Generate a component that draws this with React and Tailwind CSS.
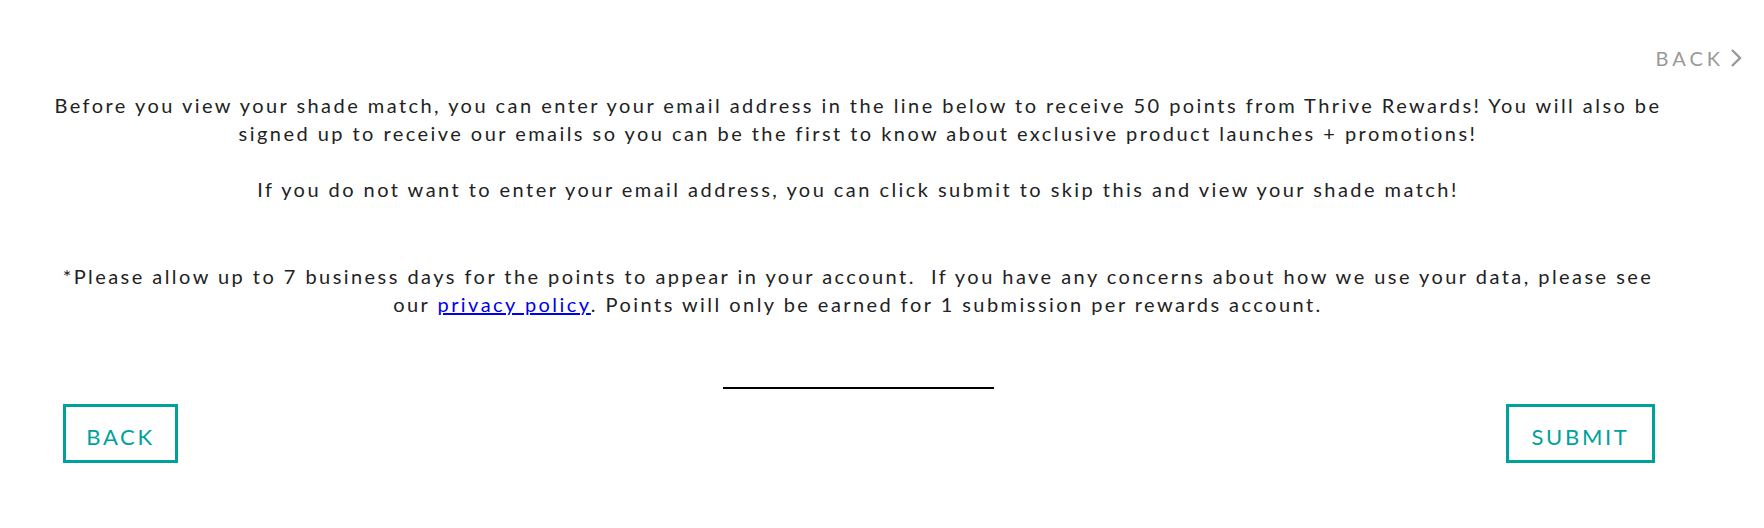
export default function App() {
  return (
    <div className="w-full h-[528px] bg-white text-[#222] font-['Lato','Liberation_Sans',sans-serif]">
      <div className="flex justify-end pt-[45px] pr-[22px]">
        <button className="flex items-center gap-[6px] text-[20px] leading-[26px] tracking-[4px] text-[#999]">
          BACK
          <svg width="12" height="20" viewBox="0 0 12 20" fill="none" stroke="#999" strokeWidth="2.4">
            <path d="M2 2l8 8-8 8" />
          </svg>
        </button>
      </div>
      <div className="pl-[52px] pr-[100px] text-center text-[20px] leading-[28px] tracking-[2.45px]">
        <p className="mt-[20px]">
          Before you view your shade match, you can enter your email address in the line below to receive 50 points from Thrive Rewards! You will also be signed up to receive our emails so you can be the first to know about exclusive product launches + promotions!
        </p>
        <p className="mt-[28px]">
          If you do not want to enter your email address, you can click submit to skip this and view your shade match!
        </p>
        <p className="mt-[59px]">
          *Please allow up to 7 business days for the points to appear in your account.&nbsp; If you have any concerns about how we use your data, please see our{' '}
          <a href="#" className="text-[#0000ee] underline">privacy policy</a>. Points will only be earned for 1 submission per rewards account.
        </p>
        <div className="flex justify-center mt-[43px]">
          <input
            type="email"
            className="w-[271px] h-[28px] border-b-2 border-black outline-none bg-transparent"
          />
        </div>
        <div className="flex justify-between pl-[11px] pr-[9px] mt-[15px]">
          <button className="w-[115px] h-[59px] pt-[6px] border-[3px] border-[#00a19b] text-[#00a19b] text-[22px] tracking-[2.7px]">
            BACK
          </button>
          <button className="w-[149px] h-[59px] pt-[6px] border-[3px] border-[#00a19b] text-[#00a19b] text-[22px] tracking-[2.7px]">
            SUBMIT
          </button>
        </div>
      </div>
    </div>
  );
}
